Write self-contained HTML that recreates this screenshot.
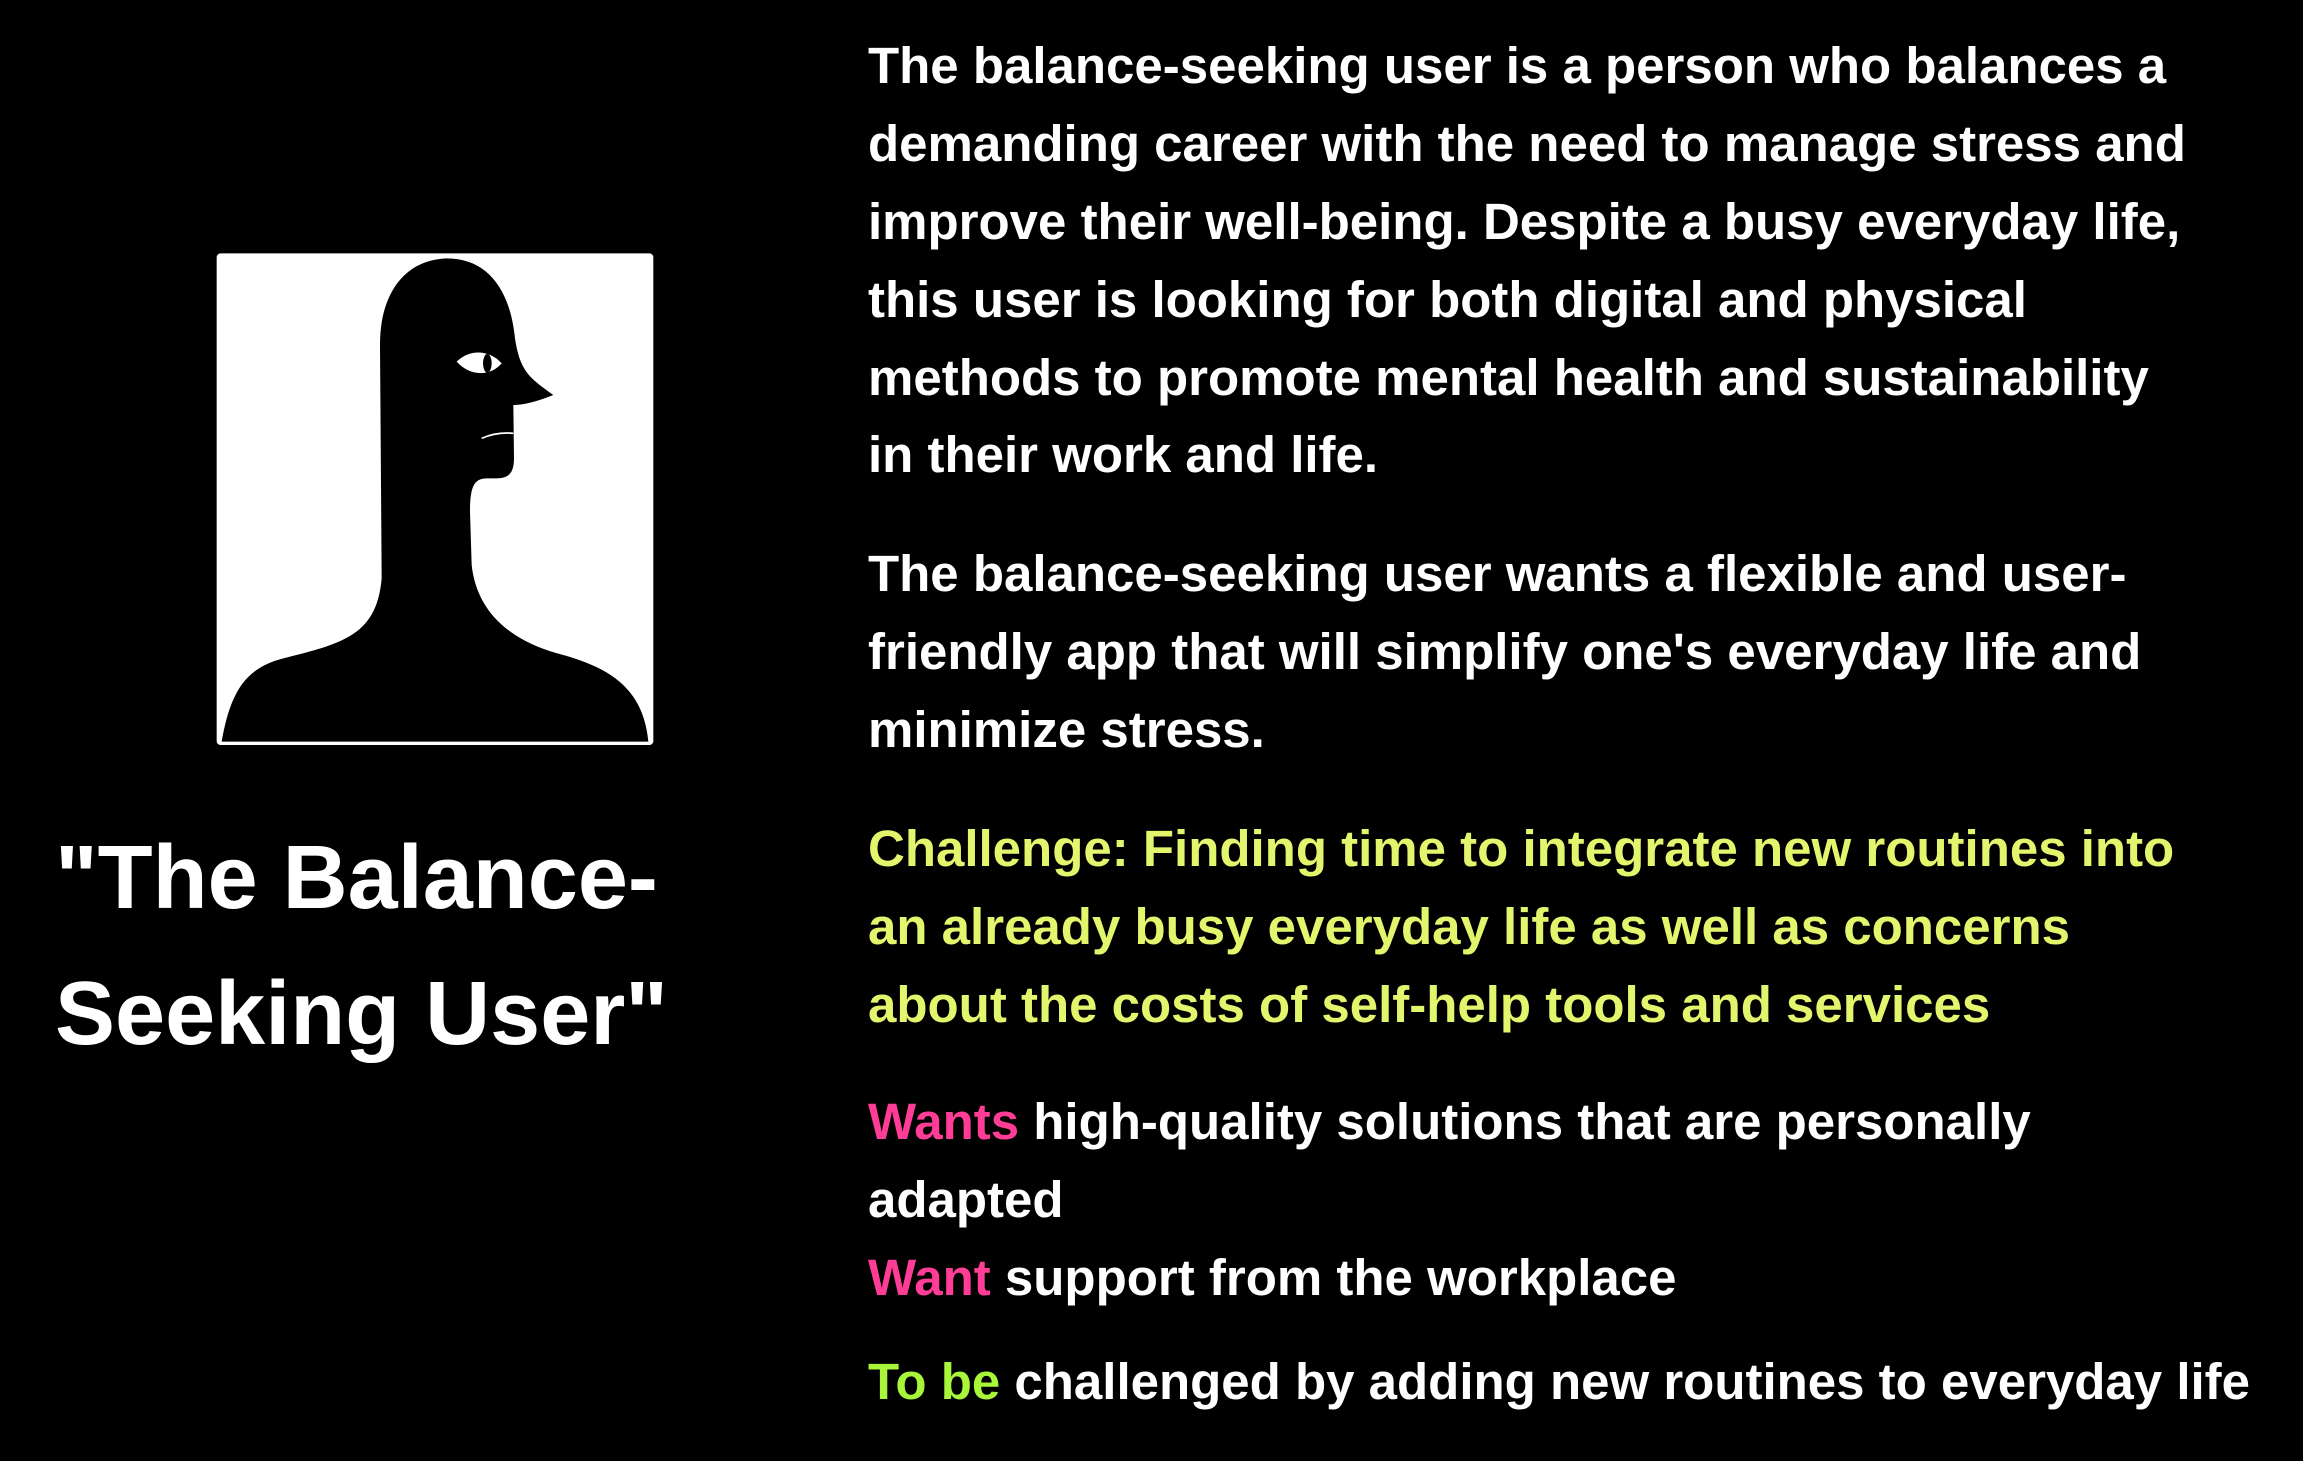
<!DOCTYPE html>
<html><head><meta charset="utf-8"><style>
html,body{margin:0;padding:0;background:#000;}
body{width:2303px;height:1461px;position:relative;overflow:hidden;font-family:"Liberation Sans",Arial,sans-serif;font-weight:bold;color:#fff;}
.l{position:absolute;left:868px;font-size:51px;line-height:78px;height:78px;white-space:nowrap;letter-spacing:0px;}
.t{position:absolute;left:55px;font-size:90px;line-height:136px;white-space:nowrap;letter-spacing:0px;}
.y{color:#e2f56c}.p{color:#ff3d97}.g{color:#a8f53a}
</style></head><body>
<svg style="position:absolute;left:210px;top:245px" width="450" height="510" viewBox="0 0 1350 1530">
<rect x="20" y="25" width="1310" height="1475" rx="12" fill="#fff"/>
<path d="M35 1490 C60 1350 100 1270 220 1240 C400 1195 500 1170 515 1000 L510 300 C510 150 580 45 710 40 C830 40 900 130 915 280 C930 380 960 400 1030 450 C980 470 940 480 910 480 L912 640 C912 690 890 700 860 700 L830 700 C790 700 780 730 780 800 L785 960 C800 1100 900 1190 1060 1230 C1200 1270 1300 1330 1315 1490 Z" fill="#000"/>
<path d="M740 350 C780 310 840 315 875 355 C840 395 780 395 740 350 Z" fill="#fff"/>
<ellipse cx="832" cy="355" rx="13" ry="28" fill="#000"/>
<path d="M815 580 Q860 560 910 565" stroke="#fff" stroke-width="5" fill="none"/>
</svg>
<div class="t" style="top:810px">"The Balance-</div>
<div class="t" style="top:946px">Seeking User"</div>

<div class="l" style="top:27px">The balance-seeking user is a person who balances a</div>
<div class="l" style="top:105px">demanding career with the need to manage stress and</div>
<div class="l" style="top:183px">improve their well-being. Despite a busy everyday life,</div>
<div class="l" style="top:261px">this user is looking for both digital and physical</div>
<div class="l" style="top:339px">methods to promote mental health and sustainability</div>
<div class="l" style="top:416px">in their work and life.</div>

<div class="l" style="top:535px">The balance-seeking user wants a flexible and user-</div>
<div class="l" style="top:613px">friendly app that will simplify one's everyday life and</div>
<div class="l" style="top:691px">minimize stress.</div>

<div class="l y" style="top:810px">Challenge: Finding time to integrate new routines into</div>
<div class="l y" style="top:888px">an already busy everyday life as well as concerns</div>
<div class="l y" style="top:966px">about the costs of self-help tools and services</div>

<div class="l" style="top:1083px"><span class="p">Wants</span> high-quality solutions that are personally</div>
<div class="l" style="top:1161px">adapted</div>
<div class="l" style="top:1239px"><span class="p">Want</span> support from the workplace</div>
<div class="l" style="top:1343px"><span class="g">To be</span> challenged by adding new routines to everyday life</div>
</body></html>
